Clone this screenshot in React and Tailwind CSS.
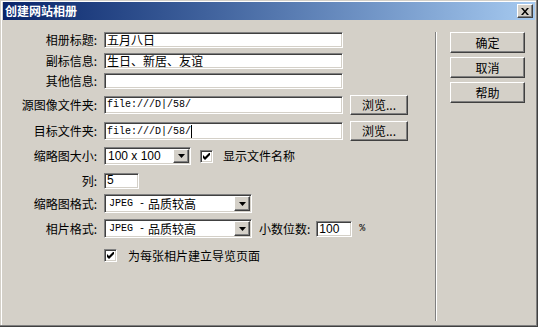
import React from "react";

const CJK = { fontFamily: '"Noto Sans CJK SC", "Liberation Sans", sans-serif' };
const MONO = { fontFamily: '"Liberation Mono", "Noto Sans CJK SC", monospace' };
const SANS = { fontFamily: '"Liberation Sans", "Noto Sans CJK SC", sans-serif' };

const sunken =
  "bg-white border border-t-[#808080] border-l-[#808080] border-b-white border-r-white shadow-[inset_1px_1px_0_#404040,inset_-1px_-1px_0_#D4D0C8]";
const raised =
  "bg-[#D4D0C8] border border-t-white border-l-white border-b-[#404040] border-r-[#404040] shadow-[inset_-1px_-1px_0_#808080]";

function Label({ children }) {
  return (
    <div className="w-[95px] shrink-0 text-right text-[12px] leading-[14px] text-black pr-[1px]" style={CJK}>
      {children}
    </div>
  );
}

function Arrow() {
  return (
    <div className={`${raised} w-[16px] h-full flex items-center justify-center`}>
      <svg width="7" height="4" viewBox="0 0 7 4">
        <path d="M0 0h7L3.5 4z" fill="#000" />
      </svg>
    </div>
  );
}

function Check() {
  return (
    <div className={`${sunken} w-[13px] h-[13px] flex items-center justify-center`}>
      <svg width="7" height="7" viewBox="0 0 7 7">
        <path d="M0 2v3l2 2 5-5V-1L2 4z" fill="#000" />
      </svg>
    </div>
  );
}

function BrowseBtn() {
  return (
    <div className={`${raised} ml-[7px] w-[58px] h-[20px] flex items-center justify-center text-[12px] leading-[14px] text-black`} style={CJK}>
      浏览...
    </div>
  );
}

function DlgBtn({ children }) {
  return (
    <div className={`${raised} w-[75px] h-[21px] flex items-center justify-center text-[12px] leading-[14px] text-black`} style={CJK}>
      {children}
    </div>
  );
}

export default function App() {
  return (
    <div
      className="w-[538px] h-[327px] bg-[#D4D0C8] flex flex-col p-[3px] pt-[2px] shadow-[inset_-1px_-1px_0_#404040,inset_-2px_-2px_0_#808080,inset_1px_1px_0_#D4D0C8,inset_2px_2px_0_#ffffff]"
    >
      {/* title bar */}
      <div className="h-[18px] shrink-0 flex items-center justify-between bg-gradient-to-r from-[#0A246A] to-[#A6CAF0] pl-[2px] pr-[2px]">
        <span className="text-white font-bold text-[12px] leading-[14px]" style={CJK}>
          创建网站相册
        </span>
        <div className={`${raised} w-[16px] h-[14px] flex items-center justify-center`}>
          <svg width="8" height="7" viewBox="0 0 8 7">
            <path d="M0 0h2l2 2.5L6 0h2L5 3.5 8 7H6L4 4.5 2 7H0l3-3.5z" fill="#000" />
          </svg>
        </div>
      </div>

      {/* body */}
      <div className="flex flex-1">
        {/* left form */}
        <div className="w-[432px] shrink-0 flex flex-col pt-[12px]">
          <div className="flex items-center h-[16px]">
            <Label>相册标题:</Label>
            <div className={`${sunken} ml-[6px] w-[239px] h-[16px] pl-[2px] text-[12px] leading-[14px]`} style={CJK}>五月八日</div>
          </div>
          <div className="flex items-center h-[16px] mt-[5px]">
            <Label>副标信息:</Label>
            <div className={`${sunken} ml-[6px] w-[239px] h-[16px] pl-[2px] text-[12px] leading-[14px]`} style={CJK}>生日、新居、友谊</div>
          </div>
          <div className="flex items-center h-[16px] mt-[4px]">
            <Label>其他信息:</Label>
            <div className={`${sunken} ml-[6px] w-[239px] h-[16px]`} />
          </div>
          <div className="flex items-center h-[20px] mt-[6px]">
            <Label>源图像文件夹:</Label>
            <div className={`${sunken} ml-[6px] w-[239px] h-[18px] pl-[2px] text-[10px] leading-[15px]`} style={MONO}>file:///D|/58/</div>
            <BrowseBtn />
          </div>
          <div className="flex items-center h-[20px] mt-[6px]">
            <Label>目标文件夹:</Label>
            <div className={`${sunken} ml-[6px] w-[239px] h-[18px] pl-[2px] text-[10px] leading-[15px] flex items-center`} style={MONO}>
              file:///D|/58/<span className="inline-block w-[1px] h-[13px] bg-black" />
            </div>
            <BrowseBtn />
          </div>
          <div className="flex items-center h-[18px] mt-[6px]">
            <Label>缩略图大小:</Label>
            <div className={`${sunken} ml-[6px] w-[87px] h-[18px] flex p-[1px]`}>
              <div className="flex-1 pl-[2px] text-[12px] leading-[14px] flex items-center" style={SANS}>100 x 100</div>
              <Arrow />
            </div>
            <div className="ml-[9px]"><Check /></div>
            <span className="ml-[10px] text-[12px] leading-[14px]" style={CJK}>显示文件名称</span>
          </div>
          <div className="flex items-center h-[16px] mt-[8px]">
            <Label>列:</Label>
            <div className={`${sunken} ml-[6px] w-[35px] h-[16px] pl-[2px] text-[12px] leading-[13px]`} style={SANS}>5</div>
          </div>
          <div className="flex items-center h-[19px] mt-[5px]">
            <Label>缩略图格式:</Label>
            <div className={`${sunken} ml-[6px] w-[148px] h-[19px] flex p-[1px]`}>
              <div className="flex-1 pl-[3px] flex items-center text-[12px] leading-[14px]">
                <span className="text-[10px]" style={MONO}>JPEG - </span>
                <span className="ml-[3px]" style={CJK}>品质较高</span>
              </div>
              <Arrow />
            </div>
          </div>
          <div className="flex items-center h-[19px] mt-[6px]">
            <Label>相片格式:</Label>
            <div className={`${sunken} ml-[6px] w-[148px] h-[19px] flex p-[1px]`}>
              <div className="flex-1 pl-[3px] flex items-center text-[12px] leading-[14px]">
                <span className="text-[10px]" style={MONO}>JPEG - </span>
                <span className="ml-[3px]" style={CJK}>品质较高</span>
              </div>
              <Arrow />
            </div>
            <span className="ml-[7px] text-[12px] leading-[14px]" style={CJK}>小数位数:</span>
            <div className={`${sunken} ml-[6px] w-[36px] h-[16px] pl-[2px] text-[12px] leading-[14px]`} style={SANS}>100</div>
            <span className="ml-[7px] text-[10px] leading-[14px]" style={MONO}>%</span>
          </div>
          <div className="flex items-center h-[13px] mt-[11px] pl-[101px]">
            <Check />
            <span className="ml-[11px] text-[12px] leading-[14px]" style={CJK}>为每张相片建立导览页面</span>
          </div>
        </div>

        {/* separator */}
        <div className="w-[2px] mt-[12px] mb-[3px] border-l border-l-[#808080] border-r border-r-white" />

        {/* buttons */}
        <div className="flex flex-col pt-[12px] pl-[13px] gap-[4px]">
          <DlgBtn>确定</DlgBtn>
          <DlgBtn>取消</DlgBtn>
          <DlgBtn>帮助</DlgBtn>
        </div>
      </div>
    </div>
  );
}
